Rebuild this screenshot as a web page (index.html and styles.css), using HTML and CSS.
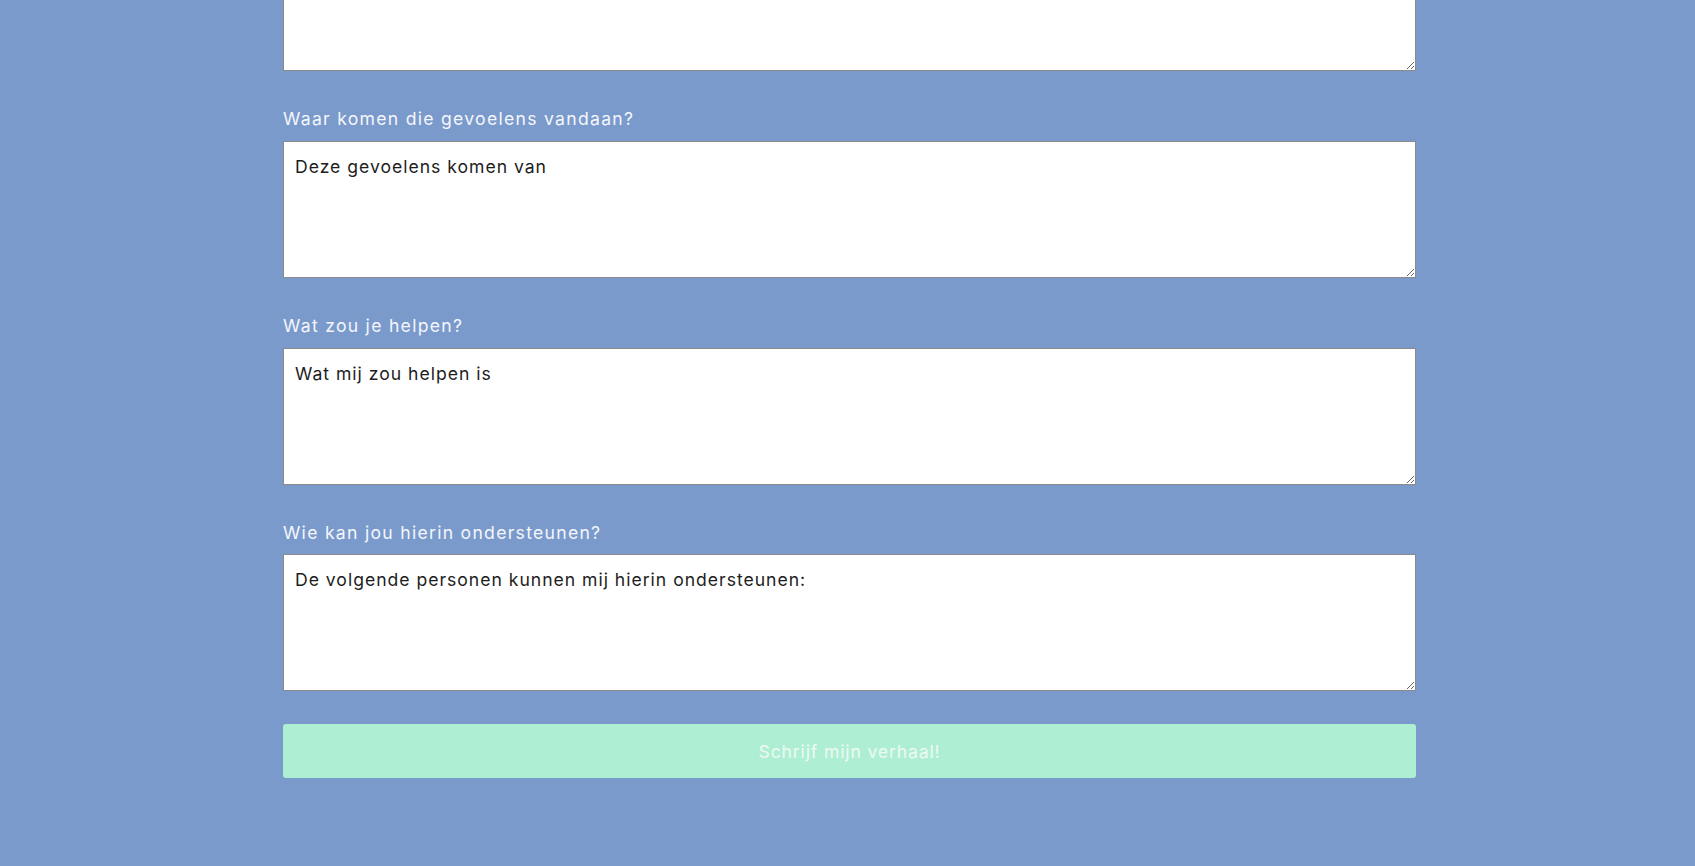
FILE: index.html
```html
<!DOCTYPE html>
<html lang="nl">
<head>
<meta charset="utf-8">
<title>Schrijf mijn verhaal</title>
<link rel="stylesheet" href="styles.css">
</head>
<body>
<div class="page">
  <form class="story-form">
    <div class="field">
      <textarea class="answer" placeholder=""></textarea>
    </div>
    <div class="field">
      <label class="question" for="q2">Waar komen die gevoelens vandaan?</label>
      <textarea class="answer" id="q2">Deze gevoelens komen van</textarea>
    </div>
    <div class="field">
      <label class="question" for="q3">Wat zou je helpen?</label>
      <textarea class="answer" id="q3">Wat mij zou helpen is</textarea>
    </div>
    <div class="field">
      <label class="question" for="q4">Wie kan jou hierin ondersteunen?</label>
      <textarea class="answer" id="q4">De volgende personen kunnen mij hierin ondersteunen:</textarea>
    </div>
    <button type="button" class="submit">Schrijf mijn verhaal!</button>
  </form>
</div>
</body>
</html>
```
FILE: styles.css
```css
html, body {
  margin: 0;
  padding: 0;
  background: #7a9acb;
  height: 100%;
  overflow: hidden;
}
body {
  font-family: Inter, "Open Sans", sans-serif;
}
.page {
  padding-left: 4px;
}
.story-form {
  width: 1133px;
  margin: -65.65px auto 0;
  display: flex;
  flex-direction: column;
}
.field {
  display: flex;
  flex-direction: column;
}
.question {
  display: block;
  color: #f4f6fb;
  font-size: 17.6px;
  letter-spacing: 1.28px;
  line-height: 26px;
  margin-top: 35px;
  margin-bottom: 8.65px;
}
.answer {
  display: block;
  box-sizing: border-box;
  width: 100%;
  height: 137px;
  margin: 0;
  padding: 12px 11px 10px;
  border: 1px solid #8a8a8a;
  background: #fff;
  color: #1d1d1d;
  font-family: inherit;
  font-size: 17.6px;
  letter-spacing: 0.98px;
  line-height: 26px;
  resize: vertical;
  outline: none;
}
.submit {
  margin-top: 33px;
  height: 53.5px;
  border: none;
  border-radius: 3px;
  background: #aeefd3;
  color: #eef9f4;
  font-family: inherit;
  font-size: 17.6px;
  letter-spacing: 0.85px;
  cursor: pointer;
}
```
